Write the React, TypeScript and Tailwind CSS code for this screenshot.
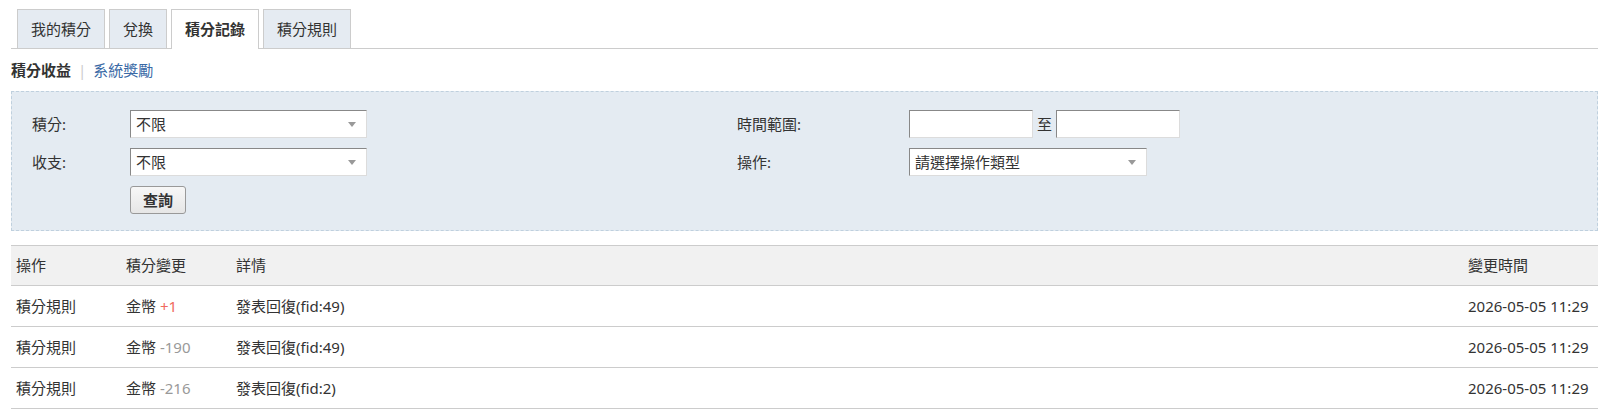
import type { ReactNode } from "react";

const font = "font-['Noto_Sans','Noto_Sans_CJK_TC',sans-serif]";

const tabs = [
	{ label: "我的積分", active: false },
	{ label: "兌換", active: false },
	{ label: "積分記錄", active: true },
	{ label: "積分規則", active: false },
];

const rows = [
	{ op: "積分規則", delta: "+1", up: true, detail: "發表回復(fid:49)", time: "2026-05-05 11:29" },
	{ op: "積分規則", delta: "-190", up: false, detail: "發表回復(fid:49)", time: "2026-05-05 11:29" },
	{ op: "積分規則", delta: "-216", up: false, detail: "發表回復(fid:2)", time: "2026-05-05 11:29" },
];

function Select({ value, width }: { value: string; width: string }) {
	return (
		<div
			className={`flex h-[28px] ${width} items-center justify-between border border-t-[#888] border-l-[#888] border-r-[#dcdcdc] border-b-[#dcdcdc] bg-white pr-[10px] pl-[5px]`}
		>
			<span>{value}</span>
			<span className="h-0 w-0 border-x-[4px] border-t-[5px] border-x-transparent border-t-[#999]" />
		</div>
	);
}

function TextInput() {
	return (
		<div className="h-[28px] w-[124px] border border-t-[#888] border-l-[#888] border-r-[#dcdcdc] border-b-[#dcdcdc] bg-white" />
	);
}

function Label({ children }: { children: ReactNode }) {
	return <div className="flex h-[28px] items-center">{children}</div>;
}

export default function App() {
	return (
		<div className={`${font} bg-white pt-[9px] pr-[8px] pl-[11px] text-[15px] text-[#333]`}>
			{/* tabs */}
			<div className="flex h-[40px] items-end gap-[4px] border-b border-[#ccc] pl-[6px]">
				{tabs.map((t) =>
					t.active ? (
						<div
							key={t.label}
							className="-mb-px flex h-[40px] items-center border-x border-t border-[#ccc] bg-white px-[13px] font-bold"
						>
							{t.label}
						</div>
					) : (
						<div
							key={t.label}
							className="flex h-[39px] items-center border-x border-t border-[#ccc] bg-[#e5ebf2] px-[13px]"
						>
							{t.label}
						</div>
					),
				)}
			</div>

			{/* sub tabs */}
			<div className="flex h-[42px] items-center">
				<span className="font-bold">積分收益</span>
				<span className="mx-[7px] text-[#ccc]">|</span>
				<span className="text-[#3a6aa6]">系統獎勵</span>
			</div>

			{/* filter */}
			<div className="h-[140px] border border-dashed border-[#bfd0de] bg-[#e4ebf2] pt-[18px] pl-[20px]">
				<div className="grid grid-cols-[98px_607px_172px_1fr] gap-y-[10px]">
					<Label>積分:</Label>
					<Select value="不限" width="w-[237px]" />
					<Label>時間範圍:</Label>
					<div className="flex items-center gap-[4px]">
						<TextInput />
						<span>至</span>
						<TextInput />
					</div>

					<Label>收支:</Label>
					<Select value="不限" width="w-[237px]" />
					<Label>操作:</Label>
					<Select value="請選擇操作類型" width="w-[238px]" />

					<div />
					<div>
						<button
							type="button"
							className="h-[28px] w-[56px] rounded-[3px] border border-[#999] bg-gradient-to-b from-[#f7f7f7] to-[#e6e6e6] font-bold text-[#333]"
						>
							查詢
						</button>
					</div>
				</div>
			</div>

			{/* table */}
			<div className="mt-[14px]">
				<div className="grid h-[41px] grid-cols-[110px_110px_1fr_125px] items-center border-y border-[#ccc] bg-[#f1f1f1] px-[5px]">
					<div>操作</div>
					<div>積分變更</div>
					<div>詳情</div>
					<div>變更時間</div>
				</div>
				{rows.map((r, i) => (
					<div
						key={i}
						className="grid h-[41px] grid-cols-[110px_110px_1fr_125px] items-center border-b border-[#ccc] px-[5px]"
					>
						<div>{r.op}</div>
						<div>
							金幣 <span className={r.up ? "text-[#f06a5e]" : "text-[#999]"}>{r.delta}</span>
						</div>
						<div>{r.detail}</div>
						<div className="whitespace-nowrap">{r.time}</div>
					</div>
				))}
			</div>
		</div>
	);
}
